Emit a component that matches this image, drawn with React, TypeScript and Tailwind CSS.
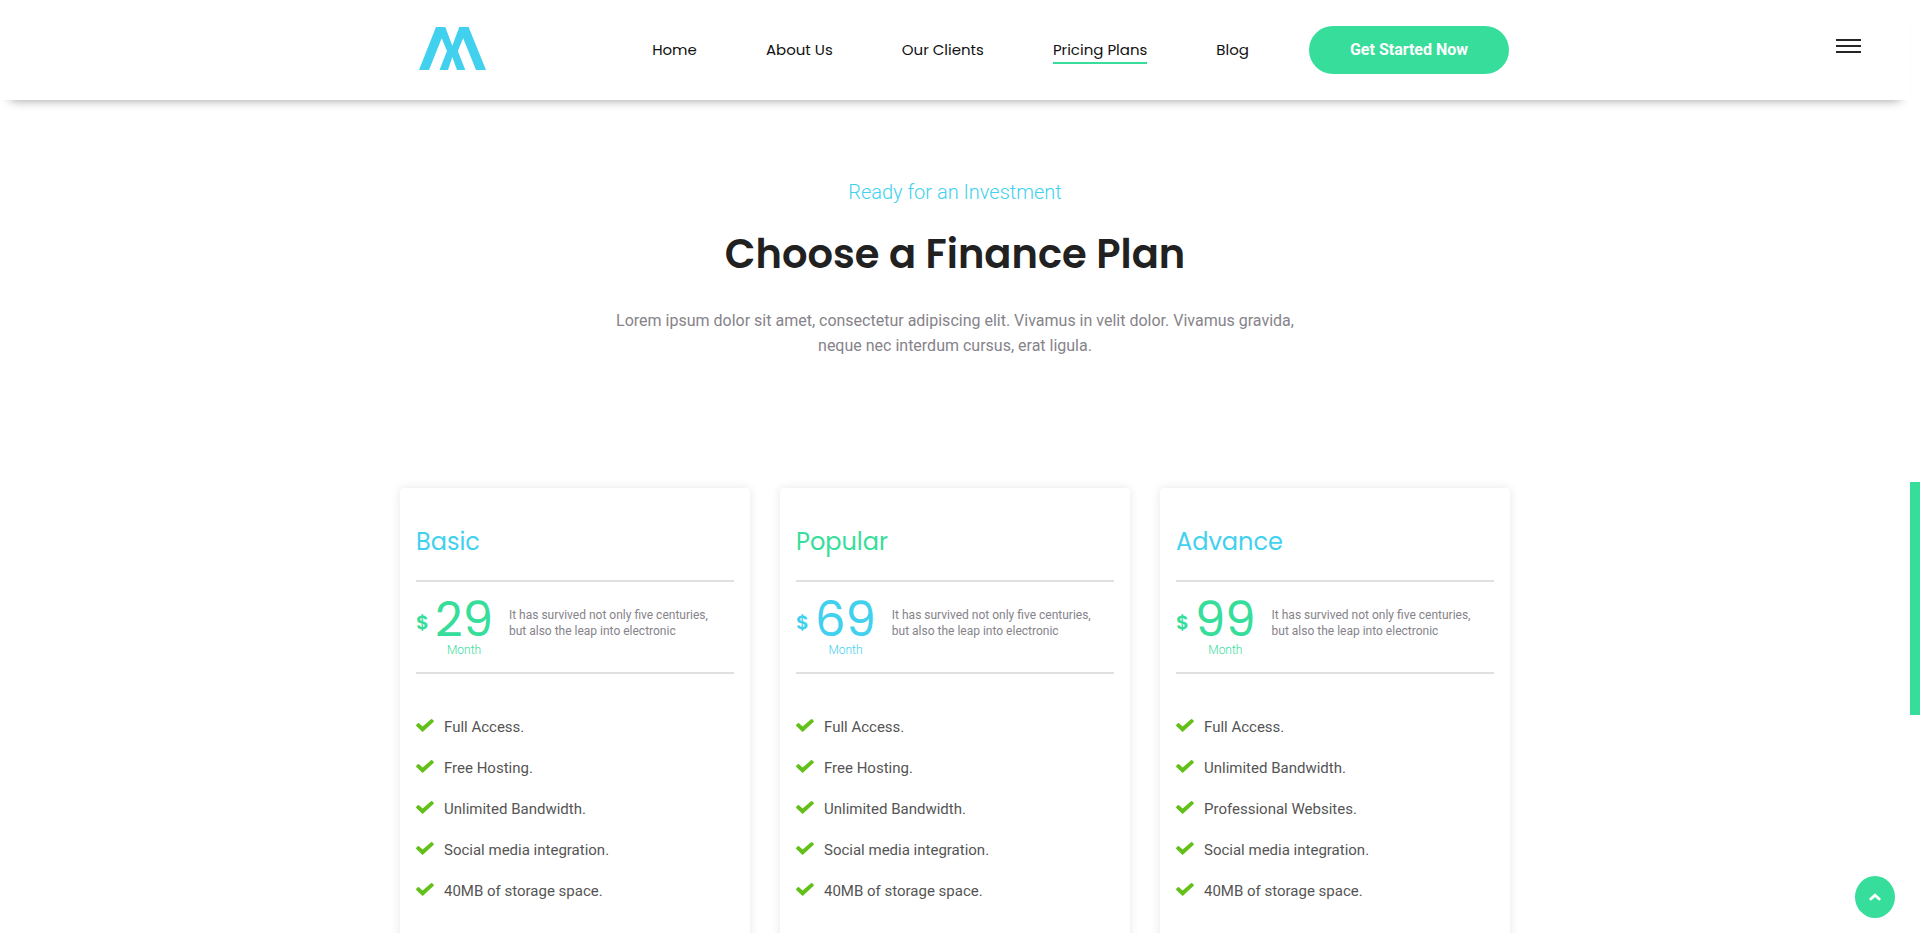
type Tone = "blue" | "green";

type Plan = {
  name: string;
  price: string;
  titleTone: Tone;
  priceTone: Tone;
  features: string[];
};

const toneClass: Record<Tone, string> = {
  blue: "text-[#41d1ee]",
  green: "text-[#37dd9a]",
};

const displayFont =
  "font-['Poppins','Inter',sans-serif] [font-feature-settings:'cv11','ss03']";

const navItems = [
  { label: "Home", href: "#home", active: false },
  { label: "About Us", href: "#about", active: false },
  { label: "Our Clients", href: "#clients", active: false },
  { label: "Pricing Plans", href: "#pricing", active: true },
  { label: "Blog", href: "#blog", active: false },
];

const plans: Plan[] = [
  {
    name: "Basic",
    price: "29",
    titleTone: "blue",
    priceTone: "green",
    features: [
      "Full Access.",
      "Free Hosting.",
      "Unlimited Bandwidth.",
      "Social media integration.",
      "40MB of storage space.",
    ],
  },
  {
    name: "Popular",
    price: "69",
    titleTone: "green",
    priceTone: "blue",
    features: [
      "Full Access.",
      "Free Hosting.",
      "Unlimited Bandwidth.",
      "Social media integration.",
      "40MB of storage space.",
    ],
  },
  {
    name: "Advance",
    price: "99",
    titleTone: "blue",
    priceTone: "green",
    features: [
      "Full Access.",
      "Unlimited Bandwidth.",
      "Professional Websites.",
      "Social media integration.",
      "40MB of storage space.",
    ],
  },
];

function Logo() {
  return (
    <svg viewBox="0 0 67 43" className="h-[43px] w-[67px]" fill="#41d1ee" aria-hidden="true">
      <path d="M0 43 17 0h9.300l7 18.700L40.300 0h9.300L67 43H57L44.200 11.200 38.800 24 46.300 43H38L33.300 30 29 43H20.500L28 24 22.700 11.200 10 43Z" />
    </svg>
  );
}

function CheckIcon() {
  return (
    <svg viewBox="0 0 18 13" className="mb-1 h-[13px] w-[18px] shrink-0" fill="#62c018" aria-hidden="true">
      <path d="M.3 5.700 1.800 4.200Q2.400 3.700 3 4.200L6.600 7.500 15 .3Q15.600-.2 16.200.3L17.700 1.700Q18.200 2.200 17.700 2.800L7.200 12.600Q6.600 13.200 6 12.600L.3 7Q-.2 6.300.3 5.700Z" />
    </svg>
  );
}

function Header() {
  return (
    <header className="relative z-10 flex h-[100px] shrink-0 items-center bg-white shadow-[0_10px_10px_-10px_rgba(0,0,0,0.4)]">
      <div className="mx-auto flex w-full max-w-[1140px] items-center justify-between pr-4 pl-[34px]">
        <a href="#home" aria-label="Home page" className="block pb-[3px]">
          <Logo />
        </a>
        <div className="flex items-center gap-[60px]">
          <nav className={`${displayFont} flex items-center gap-[69px] text-[15px] leading-6 text-[#111]`}>
            {navItems.map((item) => (
              <a
                key={item.label}
                href={item.href}
                className={
                  item.active
                    ? "border-y-2 border-t-transparent border-b-[#37dd9a]"
                    : "border-y-2 border-transparent"
                }
              >
                {item.label}
              </a>
            ))}
          </nav>
          <a
            href="#start"
            className="flex h-12 w-[200px] items-center justify-center rounded-full bg-[#37dd9a] text-base font-bold text-white"
          >
            Get Started Now
          </a>
        </div>
      </div>
      <button
        type="button"
        aria-label="Open menu"
        className="absolute top-[39px] right-[49px] flex w-[25px] flex-col gap-1"
      >
        <span className="h-0.5 w-full bg-[#262626]" />
        <span className="h-0.5 w-full bg-[#262626]" />
        <span className="h-0.5 w-full bg-[#262626]" />
      </button>
    </header>
  );
}

function PlanCard({ plan }: { plan: Plan }) {
  return (
    <article className="rounded-[4px] bg-white px-4 pt-9 pb-24 shadow-[0_0_10px_rgba(0,0,0,0.1)]">
      <h3 className={`${displayFont} ${toneClass[plan.titleTone]} text-2xl leading-9`}>{plan.name}</h3>
      <div className="mt-5 flex h-[94px] items-start border-y-2 border-[#e0e0e3]">
        <div className={`${toneClass[plan.priceTone]} flex shrink-0 items-start`}>
          <span className={`${displayFont} mt-[26px] mr-1.5 text-xl leading-7 font-semibold`}>$</span>
          <div className="flex flex-col items-center pt-3.5">
            <span className={`${displayFont} text-5xl leading-12 font-normal`}>{plan.price}</span>
            <span className="text-xs leading-3 font-light">Month</span>
          </div>
        </div>
        <p className="mt-[25px] ml-4 text-xs leading-4 text-[#86838a]">
          It has survived not only five centuries,
          <br />
          but also the leap into electronic
        </p>
      </div>
      <ul className="mt-[41px] flex flex-col gap-[17px] text-[15px] leading-6 text-[#555]">
        {plan.features.map((feature) => (
          <li key={feature} className="flex items-center gap-2.5">
            <CheckIcon />
            {feature}
          </li>
        ))}
      </ul>
    </article>
  );
}

export default function App() {
  return (
    <div className="flex h-screen overflow-hidden bg-white font-['Roboto',sans-serif]">
      <div className="flex min-w-0 flex-1 flex-col">
        <Header />
        <main id="pricing" className="mx-auto w-full max-w-[1140px] px-[15px] pt-[76px]">
          <div className="mx-auto flex max-w-[760px] flex-col items-center text-center">
            <p className="text-xl leading-8 font-light text-[#41d1ee]">Ready for an Investment</p>
            <h2 className={`${displayFont} mt-4 text-[40px] leading-[60px] font-semibold text-[#212121]`}>
              Choose a Finance Plan
            </h2>
            <p className="mt-6 text-base leading-[25px] text-[#86838a]">
              Lorem ipsum dolor sit amet, consectetur adipiscing elit. Vivamus in velit dolor. Vivamus gravida,
              <br />
              neque nec interdum cursus, erat ligula.
            </p>
          </div>
          <div className="mt-[130px] grid grid-cols-3 gap-[30px]">
            {plans.map((plan) => (
              <PlanCard key={plan.name} plan={plan} />
            ))}
          </div>
        </main>
      </div>
      <div className="relative w-2.5 shrink-0">
        <div className="absolute top-[482px] h-1/4 w-full bg-[#37dd9a]" />
      </div>
      <a
        href="#home"
        aria-label="Back to top"
        className="fixed right-[25px] bottom-[15px] z-20 flex h-[42px] w-10 items-center justify-center rounded-[50%] bg-[#37dd9a]"
      >
        <svg viewBox="0 0 12 8" className="h-2 w-3" fill="none" stroke="#fff" strokeWidth="2.800" aria-hidden="true">
          <path d="M1.800 6 6 2.200l4.200 3.800" strokeLinecap="round" />
        </svg>
      </a>
    </div>
  );
}
